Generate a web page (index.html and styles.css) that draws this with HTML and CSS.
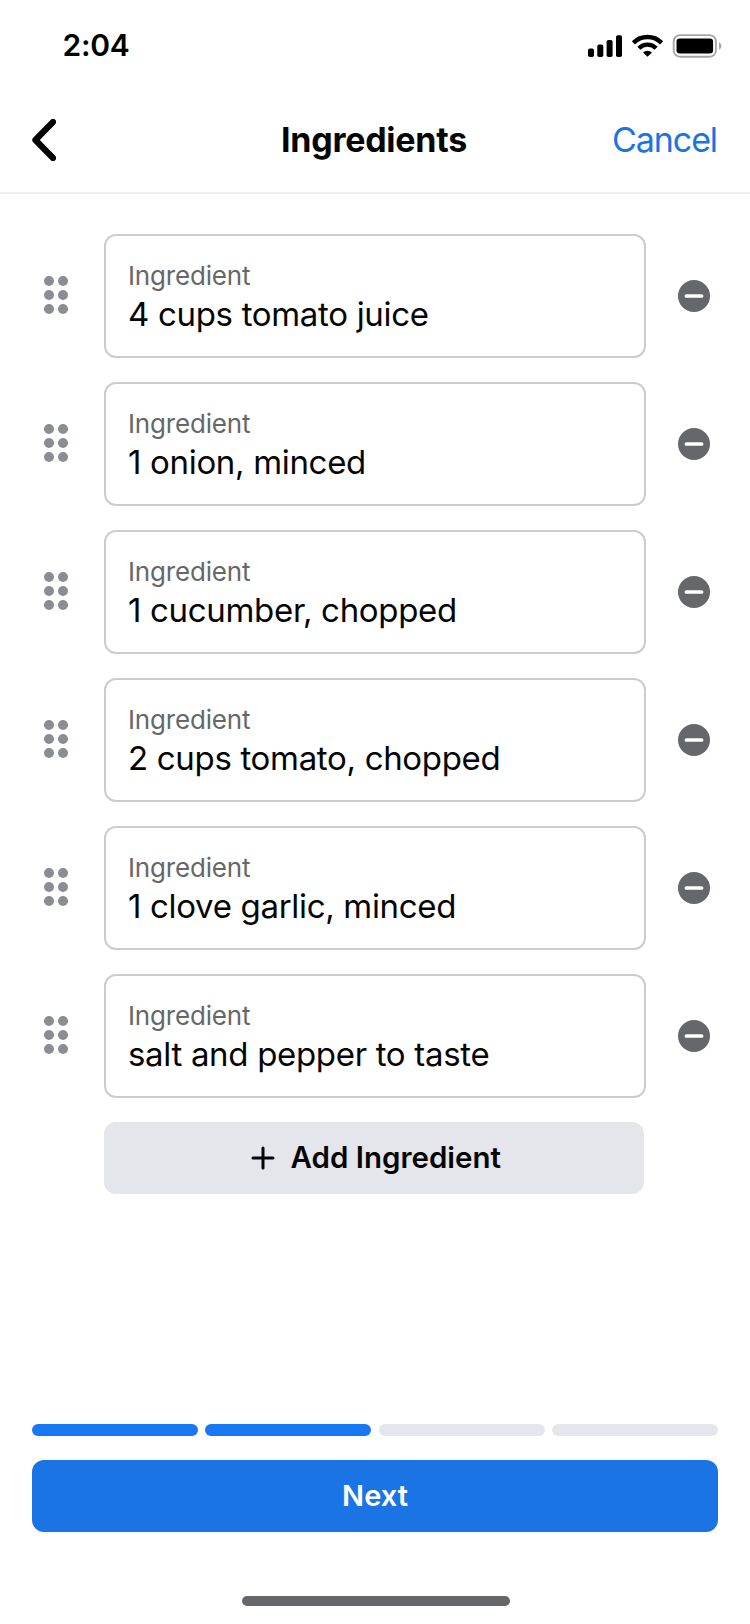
FILE: index.html
```html
<!DOCTYPE html>
<html lang="en">
<head>
<meta charset="utf-8">
<title>Ingredients</title>
<link rel="stylesheet" href="styles.css">
</head>
<body>
<svg class="sprite" aria-hidden="true">
  <symbol id="grip" viewBox="0 0 24 38">
    <circle cx="5" cy="5" r="5"/><circle cx="19" cy="5" r="5"/>
    <circle cx="5" cy="19" r="5"/><circle cx="19" cy="19" r="5"/>
    <circle cx="5" cy="33" r="5"/><circle cx="19" cy="33" r="5"/>
  </symbol>
  <symbol id="minus" viewBox="0 0 32 32">
    <circle cx="16" cy="16" r="16"/>
    <path d="M8.4 16H23.6" stroke="#fff" stroke-width="3.7" stroke-linecap="round"/>
  </symbol>
</svg>
<div class="screen">
  <div class="status-bar">
    <span class="time">2:04</span>
    <div class="status-icons">
      <svg width="134" height="24" viewBox="0 0 134 24">
        <rect x="0" y="14.6" width="6" height="8.4" rx="1.8"/>
        <rect x="9.3" y="10.6" width="6" height="12.4" rx="1.8"/>
        <rect x="18.6" y="6" width="6" height="17" rx="1.8"/>
        <rect x="28" y="1.2" width="6" height="21.8" rx="1.8"/>
        <path d="M45.4 8.8A20 20 0 0 1 73.6 8.8" fill="none" stroke="#000" stroke-width="4.5"/>
        <path d="M50.9 14.3A12 12 0 0 1 68.1 14.3" fill="none" stroke="#000" stroke-width="4.4"/>
        <path d="M55 18.4A6.6 6.6 0 0 1 64 18.4L59.5 22.8Z"/>
        <rect x="85.7" y="1.1" width="42.2" height="21.6" rx="6.3" fill="none" stroke="#a6a6a6" stroke-width="1.9"/>
        <rect x="88.5" y="4.4" width="36.6" height="15" rx="3.2"/>
        <path d="M131 8.2C134.2 9.6 134.2 14.2 131 15.6Z" fill="#a6a6a6"/>
      </svg>
    </div>
  </div>
  <header class="nav">
    <svg class="back" width="24" height="42" viewBox="0 0 24 42"><path d="M21 3L3.4 21L21 39" fill="none" stroke="#050505" stroke-width="6.2" stroke-linecap="round" stroke-linejoin="round"/></svg>
    <h1 class="title">Ingredients</h1>
    <span class="cancel">Cancel</span>
  </header>
  <main class="list">
    <div class="row"><svg class="grip"><use href="#grip"/></svg><div class="field"><span class="label">Ingredient</span><span class="value">4 cups tomato juice</span></div><svg class="minus"><use href="#minus"/></svg></div>
    <div class="row"><svg class="grip"><use href="#grip"/></svg><div class="field"><span class="label">Ingredient</span><span class="value">1 onion, minced</span></div><svg class="minus"><use href="#minus"/></svg></div>
    <div class="row"><svg class="grip"><use href="#grip"/></svg><div class="field"><span class="label">Ingredient</span><span class="value">1 cucumber, chopped</span></div><svg class="minus"><use href="#minus"/></svg></div>
    <div class="row"><svg class="grip"><use href="#grip"/></svg><div class="field"><span class="label">Ingredient</span><span class="value">2 cups tomato, chopped</span></div><svg class="minus"><use href="#minus"/></svg></div>
    <div class="row"><svg class="grip"><use href="#grip"/></svg><div class="field"><span class="label">Ingredient</span><span class="value">1 clove garlic, minced</span></div><svg class="minus"><use href="#minus"/></svg></div>
    <div class="row"><svg class="grip"><use href="#grip"/></svg><div class="field"><span class="label">Ingredient</span><span class="value">salt and pepper to taste</span></div><svg class="minus"><use href="#minus"/></svg></div>
    <div class="add"><svg width="24" height="24" viewBox="0 0 24 24"><path d="M12 2V22M2 12H22" stroke="#050505" stroke-width="3" stroke-linecap="round"/></svg><span>Add Ingredient</span></div>
  </main>
  <footer class="footer">
    <div class="progress"><i class="on"></i><i class="on"></i><i></i><i></i></div>
    <div class="next"><span>Next</span></div>
    <div class="home"></div>
  </footer>
</div>
</body>
</html>
```
FILE: styles.css
```css
* { box-sizing: border-box; }
body { margin: 0; background: #fff; color: #050505; font-family: Inter, "Liberation Sans", sans-serif; }
.sprite { position: absolute; width: 0; height: 0; }
.screen { display: flex; flex-direction: column; width: 750px; height: 1624px; }
.status-bar { display: flex; justify-content: space-between; height: 88px; padding: 34px 28px 0 62.5px; color: #000; }
.time { font-size: 30px; line-height: 22px; font-weight: 600; letter-spacing: -0.3px; }
.status-icons { height: 24px; }
.status-icons svg { display: block; }
.nav { display: grid; grid-template-columns: 150px 1fr 150px; align-items: center; height: 106px; padding: 0 32px; border-bottom: 2px solid #f0f0f0; }
.title { margin: 0; padding-right: 2px; font-size: 34px; line-height: 40px; font-weight: 700; letter-spacing: -0.27px; text-align: center; }
.cancel { justify-self: end; font-size: 34px; line-height: 40px; letter-spacing: -1.1px; padding-right: 1px; color: #1b74e4; }
.list { display: flex; flex-direction: column; gap: 24px; padding: 40px 40px 0 44px; }
.row { display: flex; align-items: center; height: 124px; }
.grip { width: 24px; height: 38px; margin: 0 36px 2px 0; fill: #8a8d91; }
.field { display: flex; flex-direction: column; width: 542px; height: 124px; padding: 24px 22px 0; border: 2px solid #c9ccd1; border-radius: 12px; }
.label { font-size: 26px; line-height: 32px; letter-spacing: -0.18px; color: #65676b; }
.value { font-size: 33px; line-height: 44px; letter-spacing: -0.32px; }
.minus { width: 32px; height: 32px; margin-left: 32px; fill: #65676b; }
.add { display: flex; align-items: center; justify-content: center; gap: 15.5px; width: 540px; height: 72px; margin-left: 60px; padding-left: 4px; border-radius: 12px; background: #e4e6eb; font-size: 29.5px; font-weight: 600; }
.add span, .next span { padding-bottom: 2px; }
.footer { margin-top: auto; padding: 0 32px 18px; }
.progress { display: flex; gap: 7.7px; height: 12px; }
.progress i { flex: 1; border-radius: 6px; background: #e4e6eb; }
.progress .on { background: #1877f2; }
.next { display: flex; align-items: center; justify-content: center; height: 72px; margin-top: 24px; border-radius: 12px; background: #1b74e4; color: #fff; font-size: 29px; font-weight: 600; }
.home { width: 268px; height: 10px; margin: 64px 0 0 210px; border-radius: 5px; background: #65676b; }
```
